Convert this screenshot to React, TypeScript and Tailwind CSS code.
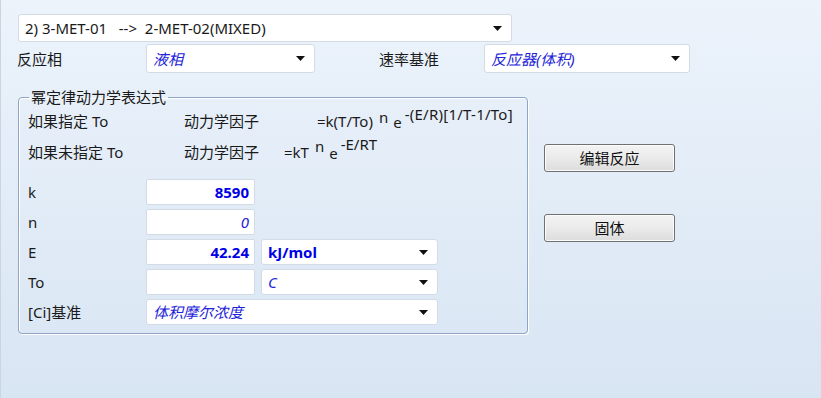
import React from 'react';

const font = { fontFamily: '"Noto Sans", "Noto Sans CJK SC", sans-serif' };

const Arrow = () => (
  <svg width="9" height="5" viewBox="0 0 9 5" className="shrink-0">
    <path d="M0 0 H9 L4.5 5 Z" fill="#111" />
  </svg>
);

interface ComboProps {
  value: string;
  className?: string;
  italic?: boolean;
  bold?: boolean;
  color?: string;
}

const Combo: React.FC<ComboProps> = ({ value, className = '', italic, bold, color }) => (
  <div
    className={`flex items-center justify-between bg-white border border-[#d3dbe6] rounded-[3px] pl-[6px] pr-[9px] ${className}`}
  >
    <span className={`${italic ? 'italic' : ''} ${bold ? 'font-bold' : ''} ${color ?? 'text-[#1a1a1a]'} whitespace-pre`}>
      {value}
    </span>
    <Arrow />
  </div>
);

const Field: React.FC<{ value?: string; italic?: boolean; bold?: boolean }> = ({ value = '', italic, bold }) => (
  <div className="w-[109px] h-[26px] bg-white border border-[#d3dbe6] rounded-[2px] flex items-center justify-end pr-[5px]">
    <span className={`${italic ? 'italic font-normal text-[#2323d8]' : ''} ${bold ? 'font-bold text-[#0000e6]' : ''}`}>{value}</span>
  </div>
);

const Button: React.FC<{ label: string }> = ({ label }) => (
  <button className="w-[131px] h-[28px] rounded-[3px] border border-[#707070] bg-gradient-to-b from-[#f3f3f3] via-[#ebebeb] to-[#dcdcdc] text-[15px] leading-[18px] text-[#111] shadow-[inset_0_0_0_1px_#fcfcfc]">
    {label}
  </button>
);

export default function App() {
  return (
    <div
      style={font}
      className="w-[821px] h-[398px] overflow-hidden bg-gradient-to-b from-[#ecf3fb] to-[#d8e5f3] border-l border-[#c8d5e4] pt-[14px] pl-[16px] text-[15px] leading-[20px] text-[#1a1a1a]"
    >
      <Combo value="2) 3-MET-01   -->  2-MET-02(MIXED)" className="ml-[1px] w-[494px] h-[28px]" />

      <div className="flex items-center h-[29px] mt-[2px]">
        <span className="w-[129px]">反应相</span>
        <Combo value="液相" italic color="text-[#2323d8]" className="w-[169px] h-[29px]" />
        <span className="ml-[64px] w-[105px]">速率基准</span>
        <Combo value="反应器(体积)" italic color="text-[#2323d8]" className="w-[206px] h-[29px]" />
      </div>

      <div className="flex mt-[14px]">
        <fieldset className="ml-[1px] w-[510px] h-[247px] border border-[#8fa5c1] rounded-[4px] shadow-[inset_1px_1px_0_#ffffff,1px_1px_0_#ffffff] px-[9px]">
          <legend className="ml-[1px] px-[2px] leading-[20px]">幂定律动力学表达式</legend>

          <div className="flex items-end h-[22px] mt-[2px]">
            <span className="w-[156px]">如果指定 To</span>
            <span className="w-[133px]">动力学因子</span>
            <span>=k(T/To)</span>
            <span className="ml-[6px] relative -top-[4px]">n</span>
            <span className="ml-[5px] relative top-[1px]">e</span>
            <span className="ml-[3px] relative -top-[7px] tracking-[0.25px]">-(E/R)[1/T-1/To]</span>
          </div>

          <div className="flex items-end h-[22px] mt-[9px]">
            <span className="w-[156px]">如果未指定 To</span>
            <span className="w-[100px]">动力学因子</span>
            <span>=kT</span>
            <span className="ml-[6px] relative -top-[6px]">n</span>
            <span className="ml-[5px] relative top-[1px]">e</span>
            <span className="ml-[3px] relative -top-[8px]">-E/RT</span>
          </div>

          <div className="flex flex-col gap-[4px] mt-[17px]">
            <div className="flex items-center">
              <span className="w-[118px]">k</span>
              <Field value="8590" bold />
            </div>
            <div className="flex items-center">
              <span className="w-[118px]">n</span>
              <Field value="0" italic />
            </div>
            <div className="flex items-center">
              <span className="w-[118px]">E</span>
              <Field value="42.24" bold />
              <Combo value="kJ/mol" bold color="text-[#0000e6]" className="ml-[6px] w-[177px] h-[26px] pl-[4px]" />
            </div>
            <div className="flex items-center">
              <span className="w-[118px]">To</span>
              <Field />
              <Combo value="C" italic color="text-[#2323d8]" className="ml-[6px] w-[177px] h-[26px] pl-[4px]" />
            </div>
            <div className="flex items-center">
              <span className="w-[118px]">[Ci]基准</span>
              <Combo value="体积摩尔浓度" italic color="text-[#2323d8]" className="w-[292px] h-[26px] pl-[4px]" />
            </div>
          </div>
        </fieldset>

        <div className="flex flex-col ml-[16px] pt-[57px] gap-[42px]">
          <Button label="编辑反应" />
          <Button label="固体" />
        </div>
      </div>
    </div>
  );
}
